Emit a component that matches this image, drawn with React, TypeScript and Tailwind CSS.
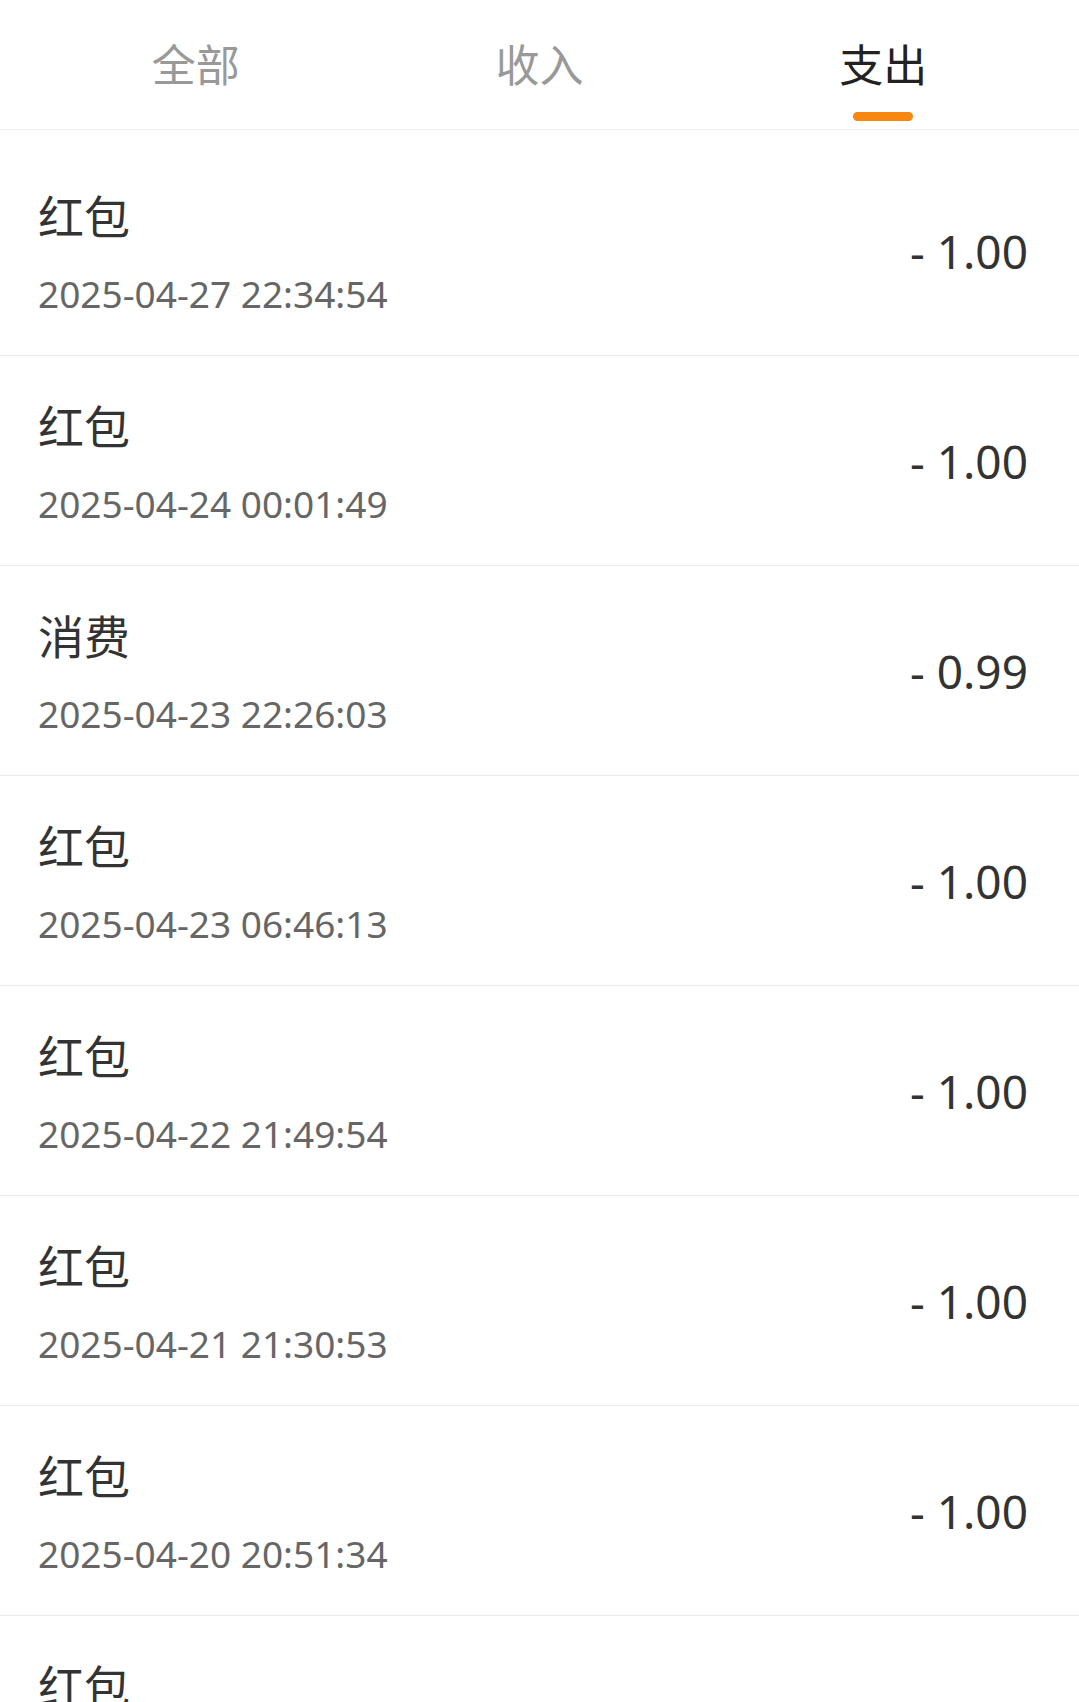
import { useState } from "react";

const records = [
  { title: "红包", time: "2025-04-27 22:34:54", amount: "- 1.00" },
  { title: "红包", time: "2025-04-24 00:01:49", amount: "- 1.00" },
  { title: "消费", time: "2025-04-23 22:26:03", amount: "- 0.99" },
  { title: "红包", time: "2025-04-23 06:46:13", amount: "- 1.00" },
  { title: "红包", time: "2025-04-22 21:49:54", amount: "- 1.00" },
  { title: "红包", time: "2025-04-21 21:30:53", amount: "- 1.00" },
  { title: "红包", time: "2025-04-20 20:51:34", amount: "- 1.00" },
  { title: "红包", time: "2025-04-19 19:12:08", amount: "- 1.00" },
];

const tabs = ["全部", "收入", "支出"];

export default function App() {
  const [active, setActive] = useState(2);

  return (
    <div
      className="h-[1702px] w-full overflow-hidden bg-white"
      style={{ fontFamily: '"Noto Sans", "Noto Sans CJK SC", sans-serif' }}
    >
      <div className="flex h-[130px] border-b border-[#efefef] px-6">
        {tabs.map((t, i) => (
          <button
            key={t}
            onClick={() => setActive(i)}
            className="relative flex flex-1 flex-col items-center"
          >
            <span
              className={
                "mt-[41px] text-[44px] leading-[48px] " +
                (i === active ? "text-[#222222]" : "text-[#999999]")
              }
            >
              {t}
            </span>
            {i === active && (
              <span className="mt-[23px] h-[9px] w-[60px] rounded-full bg-[#f7870f]" />
            )}
          </button>
        ))}
      </div>

      <div className="pt-[16px]">
        {records.map((r, i) => (
          <div
            key={i}
            className="flex h-[210px] items-center justify-between border-b border-[#eaeaea] pl-[38px] pr-[51px]"
          >
            <div className="flex flex-col pt-[2px]">
              <span className="text-[46px] leading-[56px] text-[#333333]">{r.title}</span>
              <span className="mt-[28px] text-[37px] leading-[44px] text-[#666666]">{r.time}</span>
            </div>
            <span className="pt-[2px] text-[46px] text-[#333333]">{r.amount}</span>
          </div>
        ))}
      </div>
    </div>
  );
}
